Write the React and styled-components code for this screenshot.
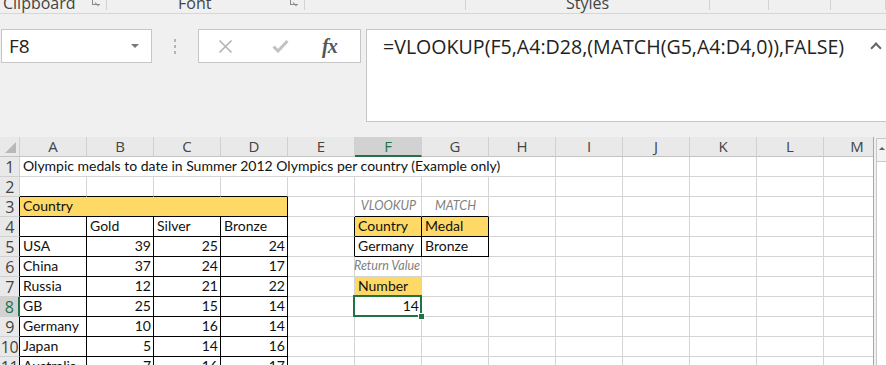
import styled, { createGlobalStyle } from 'styled-components';

const GlobalStyle = createGlobalStyle`
  html, body {
    margin: 0;
    padding: 0;
    background: #f0f0f0;
    overflow: hidden;
  }
  body {
    width: 886px;
    height: 365px;
    font-family: 'Open Sans', 'Noto Sans', sans-serif;
  }
`;

const COLS = ['A', 'B', 'C', 'D', 'E', 'F', 'G', 'H', 'I', 'J', 'K', 'L', 'M'];
const ROWS = 11;
const SEL_COL = 5;
const SEL_ROW = 8;

const table = [
  ['USA', 39, 25, 24],
  ['China', 37, 24, 17],
  ['Russia', 12, 21, 22],
  ['GB', 25, 15, 14],
  ['Germany', 10, 16, 14],
  ['Japan', 5, 14, 16],
  ['Australia', 7, 16, 17],
];

const cells = {
  A1: { t: 'Olympic medals to date in Summer 2012 Olympics per country (Example only)', span: 8 },
  A3: { t: 'Country', span: 4, fill: true, box: true },
  A4: { box: true },
  B4: { t: 'Gold', box: true },
  C4: { t: 'Silver', box: true },
  D4: { t: 'Bronze', box: true },
  F3: { t: 'VLOOKUP', note: true, align: 'center' },
  G3: { t: 'MATCH', note: true, align: 'center' },
  F4: { t: 'Country', fill: true, box: true },
  G4: { t: 'Medal', fill: true, box: true },
  F5: { t: 'Germany', box: true },
  G5: { t: 'Bronze', box: true },
  F6: { t: 'Return Value', note: true, tight: true },
  F7: { t: 'Number', fill: true },
  F8: { t: '14', align: 'right', selected: true },
};

table.forEach((row, i) => {
  row.forEach((v, c) => {
    cells[`${COLS[c]}${i + 5}`] = {
      t: String(v),
      align: c === 0 ? 'left' : 'right',
      box: true,
    };
  });
});

// matrix of boxed flags (taking spans into account)
const boxed = [];
const covered = {};
for (let r = 1; r <= ROWS + 1; r++) {
  boxed[r] = [];
  for (let c = 0; c < COLS.length; c++) boxed[r][c] = false;
}
Object.entries(cells).forEach(([key, cell]) => {
  const c = COLS.indexOf(key[0]);
  const r = Number(key.slice(1));
  const span = cell.span || 1;
  for (let i = 0; i < span; i++) {
    if (cell.box) boxed[r][c + i] = true;
    if (i > 0) covered[`${COLS[c + i]}${r}`] = true;
  }
});
const isBoxed = (r, c) => !!(boxed[r] && boxed[r][c]);

const Page = styled.div`
  width: 886px;
  height: 365px;
  overflow: hidden;
  background: #f0f0f0;
  display: flex;
  flex-direction: column;
`;

const Ribbon = styled.div`
  height: 13px;
  border-bottom: 1px solid #d6d6d6;
  display: flex;
  overflow: hidden;
  flex-shrink: 0;
`;

const Group = styled.div`
  width: ${({ $w }) => $w}px;
  flex-shrink: 0;
  border-right: 1px solid #d2d2d2;
  box-sizing: border-box;
  position: relative;
  display: flex;
  justify-content: ${({ $center }) => ($center ? 'center' : 'flex-start')};
  padding-left: ${({ $pad }) => $pad || 0}px;
  height: 10px;
`;

const GroupLabel = styled.span`
  font-size: 16px;
  color: #444;
  line-height: 16px;
  margin-top: -5px;
  white-space: nowrap;
`;

const Launcher = styled.span`
  position: absolute;
  right: 6px;
  top: -3px;
  width: 7px;
  height: 7px;
  border-left: 1px solid #8a8a8a;
  border-bottom: 1px solid #8a8a8a;
  &::after {
    content: '';
    position: absolute;
    left: 2px;
    bottom: 1px;
    width: 5px;
    height: 1px;
    background: #8a8a8a;
    transform: rotate(45deg);
    transform-origin: left center;
  }
`;

const FormulaArea = styled.div`
  height: 123px;
  flex-shrink: 0;
  box-sizing: border-box;
  padding-top: 15px;
  display: flex;
  align-items: flex-start;
`;

const NameBox = styled.div`
  margin-left: 1px;
  width: 151px;
  height: 34px;
  box-sizing: border-box;
  background: #fff;
  border: 1px solid #c6c6c6;
  display: flex;
  align-items: center;
  justify-content: space-between;
  padding: 0 12px 0 7px;
  font-size: 19px;
  color: #222;
`;

const Caret = styled.span`
  width: 0;
  height: 0;
  border-left: 4px solid transparent;
  border-right: 4px solid transparent;
  border-top: 4px solid #777;
`;

const Grip = styled.div`
  width: 46px;
  height: 34px;
  display: flex;
  flex-direction: column;
  align-items: center;
  justify-content: center;
  gap: 3px;
  & span {
    width: 2px;
    height: 3px;
    background: #b4b4b4;
  }
`;

const ButtonBox = styled.div`
  width: 163px;
  height: 34px;
  box-sizing: border-box;
  background: #fff;
  border: 1px solid #c6c6c6;
  display: flex;
  align-items: center;
  padding-left: 19px;
`;

const IconSlot = styled.div`
  width: ${({ $w }) => $w}px;
  display: flex;
  align-items: center;
`;

const Fx = styled.span`
  font-family: 'Liberation Serif', 'DejaVu Serif', serif;
  font-style: italic;
  font-weight: bold;
  font-size: 20px;
  color: #555;
  letter-spacing: -1px;
`;

const FormulaBar = styled.div`
  margin-left: 5px;
  flex: 1;
  height: 93px;
  box-sizing: border-box;
  background: #fff;
  border: 1px solid #c6c6c6;
  border-right: none;
  position: relative;
  padding: 3px 0 0 16px;
  font-size: 19.6px;
  color: #222;
  white-space: nowrap;
`;

const Collapse = styled.span`
  position: absolute;
  right: 6px;
  top: 14px;
  width: 6px;
  height: 6px;
  border-left: 2px solid #666;
  border-top: 2px solid #666;
  transform: rotate(45deg);
`;

const Sheet = styled.div`
  display: flex;
  flex: 1;
  min-height: 0;
`;

const Grid = styled.div`
  width: 873px;
  flex-shrink: 0;
  overflow: hidden;
  background: #fff;
  display: grid;
  grid-template-columns: 20px repeat(13, 67px);
  grid-auto-rows: 20px;
  align-content: start;
`;

const Corner = styled.div`
  background: #e9e9e9;
  border-right: 1px solid #d0d0d0;
  border-bottom: 1px solid #c4c4c4;
  position: relative;
  &::after {
    content: '';
    position: absolute;
    right: 3px;
    bottom: 3px;
    width: 0;
    height: 0;
    border-left: 11px solid transparent;
    border-bottom: 11px solid #b8b8b8;
  }
`;

const ColHead = styled.div`
  background: ${({ $active }) => ($active ? '#d2d2d2' : '#e9e9e9')};
  border-right: 1px solid #d0d0d0;
  border-bottom: ${({ $active }) => ($active ? '2px solid #217346' : '1px solid #c4c4c4')};
  color: ${({ $active }) => ($active ? '#217346' : '#444')};
  font-size: 15px;
  display: flex;
  align-items: center;
  justify-content: center;
  line-height: 1;
`;

const RowHead = styled.div`
  background: ${({ $active }) => ($active ? '#d2d2d2' : '#e9e9e9')};
  border-right: ${({ $active, $edge }) =>
    $active ? '2px solid #217346' : $edge ? '1px solid #000' : '1px solid #d0d0d0'};
  border-bottom: 1px solid #d0d0d0;
  color: ${({ $active }) => ($active ? '#217346' : '#444')};
  font-size: 16px;
  display: flex;
  align-items: center;
  justify-content: center;
  line-height: 1;
  letter-spacing: -0.5px;
  white-space: nowrap;
  overflow: visible;
`;

const Cell = styled.div`
  grid-column: span ${({ $span }) => $span};
  position: relative;
  z-index: ${({ $selected }) => ($selected ? 2 : 'auto')};
  background: ${({ $fill }) => ($fill ? '#ffd966' : 'transparent')};
  border-right: 1px solid ${({ $r }) => ($r ? '#000' : '#d4d4d4')};
  border-bottom: 1px solid ${({ $b }) => ($b ? '#000' : '#d4d4d4')};
  display: flex;
  align-items: flex-end;
  justify-content: ${({ $align }) =>
    $align === 'right' ? 'flex-end' : $align === 'center' ? 'center' : 'flex-start'};
  padding: 0 2px 1px ${({ $tight }) => ($tight ? 0 : 3)}px;
  margin-left: ${({ $tight }) => ($tight ? -1 : 0)}px;
  font-family: 'Lato', 'Open Sans', sans-serif;
  font-size: ${({ $note }) => ($note ? '12.5px' : '14px')};
  font-style: ${({ $note }) => ($note ? 'italic' : 'normal')};
  color: ${({ $note }) => ($note ? '#7f7f7f' : '#111')};
  line-height: 18px;
  white-space: nowrap;
  overflow: visible;
  &::after {
    content: ${({ $selected }) => ($selected ? "''" : 'none')};
    position: absolute;
    left: -2px;
    top: -2px;
    right: -1px;
    bottom: -1px;
    border: 2px solid #217346;
  }
  &::before {
    content: ${({ $selected }) => ($selected ? "''" : 'none')};
    position: absolute;
    right: -4px;
    bottom: -4px;
    width: 5px;
    height: 5px;
    background: #217346;
    border: 1px solid #fff;
    z-index: 3;
  }
`;

const ScrollBar = styled.div`
  flex: 1;
  background: #f0f0f0;
  border-left: 1px solid #a8a8a8;
  padding: 1px 0 0 2px;
`;

const ScrollTrack = styled.div`
  height: 100%;
  background: #fff;
  border-left: 1px solid #c8c8c8;
  border-top: 1px solid #c8c8c8;
`;

const ScrollUp = styled.div`
  height: 23px;
  border-bottom: 1px solid #c8c8c8;
  background: #f3f3f3;
  display: flex;
  justify-content: center;
  padding-top: 8px;
  box-sizing: border-box;
  &::after {
    content: '';
    width: 0;
    height: 0;
    border-left: 3px solid transparent;
    border-right: 3px solid transparent;
    border-bottom: 3px solid #606060;
  }
`;

function SheetGrid() {
  const out = [<Corner key="corner" />];
  COLS.forEach((c, i) => {
    out.push(
      <ColHead key={`h${c}`} $active={i === SEL_COL}>
        {c}
      </ColHead>
    );
  });
  for (let r = 1; r <= ROWS; r++) {
    out.push(
      <RowHead key={`r${r}`} $active={r === SEL_ROW} $edge={isBoxed(r, 0)}>
        {r}
      </RowHead>
    );
    for (let c = 0; c < COLS.length; c++) {
      const key = `${COLS[c]}${r}`;
      if (covered[key]) continue;
      const cell = cells[key] || {};
      const span = cell.span || 1;
      const last = c + span - 1;
      let bottom = false;
      for (let i = c; i <= last; i++) {
        if (isBoxed(r, i) || isBoxed(r + 1, i)) bottom = true;
      }
      out.push(
        <Cell
          key={key}
          $span={span}
          $fill={cell.fill}
          $note={cell.note}
          $tight={cell.tight}
          $align={cell.align}
          $selected={cell.selected}
          $r={isBoxed(r, last) || isBoxed(r, last + 1)}
          $b={bottom}
        >
          {cell.t}
        </Cell>
      );
    }
  }
  return <Grid>{out}</Grid>;
}

export default function App() {
  return (
    <Page>
      <GlobalStyle />
      <Ribbon>
        <Group $w={107} $pad={3}>
          <GroupLabel>Clipboard</GroupLabel>
          <Launcher />
        </Group>
        <Group $w={198} $pad={71}>
          <GroupLabel>Font</GroupLabel>
          <Launcher />
        </Group>
        <Group $w={161} />
        <Group $w={244} $center>
          <GroupLabel>Styles</GroupLabel>
        </Group>
        <Group $w={59} />
        <Group $w={62} />
        <Group $w={55} />
      </Ribbon>
      <FormulaArea>
        <NameBox>
          <span>F8</span>
          <Caret />
        </NameBox>
        <Grip>
          <span />
          <span />
          <span />
        </Grip>
        <ButtonBox>
          <IconSlot $w={54}>
            <svg width="15" height="15" viewBox="0 0 15 15">
              <path d="M1.5 1.5 L13.5 13.5 M13.5 1.5 L1.5 13.5" stroke="#b3b3b3" strokeWidth="1.6" fill="none" />
            </svg>
          </IconSlot>
          <IconSlot $w={50}>
            <svg width="17" height="14" viewBox="0 0 17 14">
              <path d="M1.5 7.5 L6 12 L15.5 2" stroke="#c2c2c2" strokeWidth="3" fill="none" />
            </svg>
          </IconSlot>
          <IconSlot $w={30}>
            <Fx>fx</Fx>
          </IconSlot>
        </ButtonBox>
        <FormulaBar>
          =VLOOKUP(F5,A4:D28,(MATCH(G5,A4:D4,0)),FALSE)
          <Collapse />
        </FormulaBar>
      </FormulaArea>
      <Sheet>
        <SheetGrid />
        <ScrollBar>
          <ScrollTrack>
            <ScrollUp />
          </ScrollTrack>
        </ScrollBar>
      </Sheet>
    </Page>
  );
}
